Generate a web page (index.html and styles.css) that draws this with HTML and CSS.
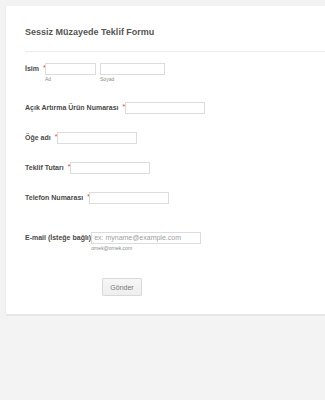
FILE: index.html
```html
<!DOCTYPE html>
<html lang="tr">
<head>
<meta charset="utf-8">
<title>Sessiz Müzayede Teklif Formu</title>
<link rel="stylesheet" href="styles.css">
</head>
<body>
<div class="card">
  <h1 class="title">Sessiz Müzayede Teklif Formu</h1>
  <div class="divider"></div>
  <div class="row row-name">
    <span class="label">İsim</span><span class="star">*</span>
    <div class="field">
      <span class="input w51"></span>
      <span class="sub">Ad</span>
    </div>
    <div class="field">
      <span class="input w65"></span>
      <span class="sub">Soyad</span>
    </div>
  </div>
  <div class="row">
    <span class="label">Açık Artırma Ürün Numarası</span><span class="star">*</span>
    <span class="input w80"></span>
  </div>
  <div class="row">
    <span class="label">Öğe adı</span><span class="star">*</span>
    <span class="input w80"></span>
  </div>
  <div class="row">
    <span class="label">Teklif Tutarı</span><span class="star">*</span>
    <span class="input w80"></span>
  </div>
  <div class="row">
    <span class="label">Telefon Numarası</span><span class="star">*</span>
    <span class="input w80"></span>
  </div>
  <div class="row row-email">
    <span class="label label-tight">E-mail (İsteğe bağlı)</span>
    <div class="field">
      <span class="input w110 ph">ex: myname@example.com</span>
      <span class="sub">ornek@ornek.com</span>
    </div>
  </div>
  <div class="actions">
    <button class="btn" type="button">Gönder</button>
  </div>
</div>
</body>
</html>
```
FILE: styles.css
```css
html, body {
  margin: 0;
  padding: 0;
  overflow: hidden;
}
body {
  background: #f3f3f3;
  font-family: "Liberation Sans", Arial, sans-serif;
  width: 325px;
  height: 400px;
}
.card {
  margin: 6px 0 0 6px;
  background: #fff;
  box-shadow: 0 2px 0 #e6e6e6, -1px 0 0 #ececec;
  padding: 20px 0 18px 19px;
}
.title {
  margin: 0;
  font-size: 9px;
  line-height: 12px;
  font-weight: bold;
  color: #555;
}
.divider {
  margin-top: 13px;
  height: 1px;
  background: #ebebeb;
}
.row {
  display: flex;
  align-items: flex-start;
  padding-bottom: 18px;
}
.row-name {
  margin-top: 11px;
  padding-bottom: 19px;
}
.row-email {
  margin-top: 10px;
  padding-bottom: 26px;
}
.label {
  font-size: 7px;
  line-height: 12px;
  font-weight: bold;
  color: #4a4a4a;
  margin-right: 4px;
  white-space: nowrap;
}
.label-tight {
  margin-right: 0;
}
.star {
  width: 2px;
  font-size: 7px;
  line-height: 9px;
  color: #e0383e;
  overflow: visible;
  white-space: nowrap;
}
.field {
  display: flex;
  flex-direction: column;
  margin-right: 4px;
}
.input {
  display: block;
  height: 12px;
  box-sizing: border-box;
  border: 1px solid #dcdcdc;
  background: #fff;
}
.w51 { width: 51px; }
.w65 { width: 65px; }
.w80 { width: 80px; }
.w110 { width: 110px; }
.ph {
  font-size: 7px;
  line-height: 10px;
  color: #a0a0a0;
  padding-left: 2px;
  white-space: nowrap;
}
.sub {
  margin-top: 1px;
  font-size: 5px;
  line-height: 7px;
  color: #8a8a8a;
}
.actions {
  padding-left: 77px;
}
.btn {
  display: block;
  width: 40px;
  height: 18px;
  padding: 0;
  margin: 0;
  border: 1px solid #d8d8d8;
  border-radius: 1px;
  background: linear-gradient(#f7f7f7, #eeeeee);
  font-family: "Liberation Sans", Arial, sans-serif;
  font-size: 7px;
  color: #777;
}
```
